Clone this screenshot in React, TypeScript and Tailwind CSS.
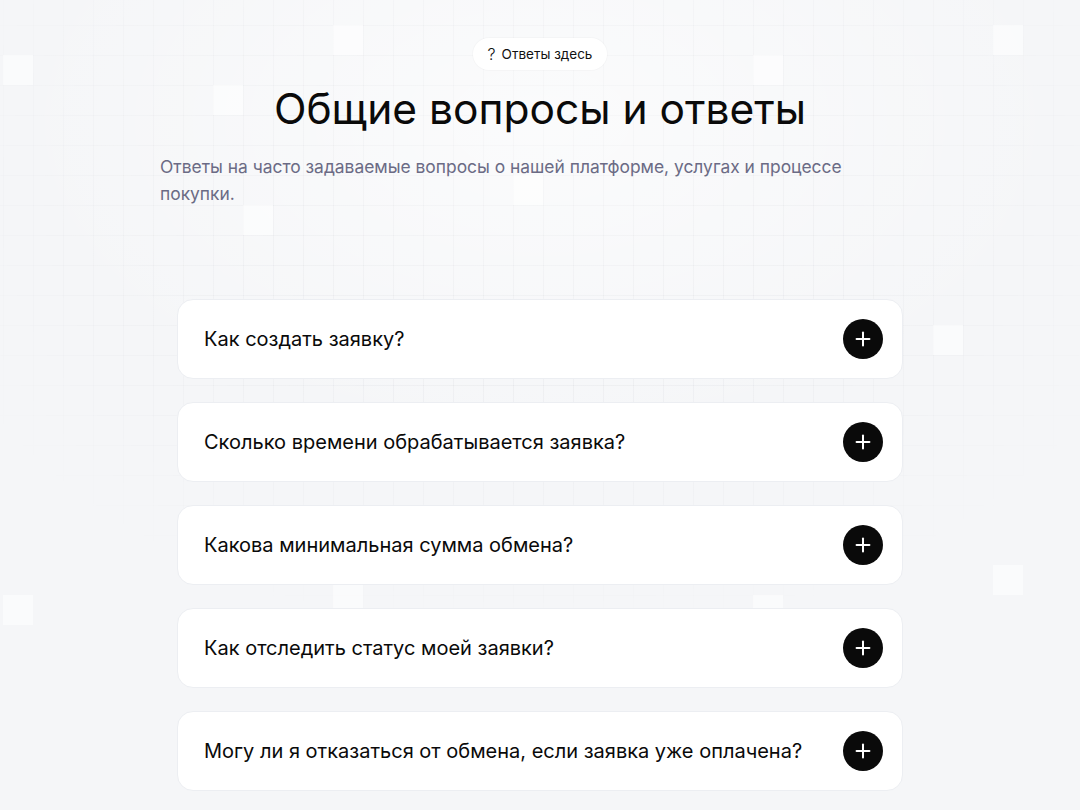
import { Plus } from "lucide-react";

const questions = [
  "Как создать заявку?",
  "Сколько времени обрабатывается заявка?",
  "Какова минимальная сумма обмена?",
  "Как отследить статус моей заявки?",
  "Могу ли я отказаться от обмена, если заявка уже оплачена?",
];

// светлые клетки поверх сетки
const tiles = [
  { x: 333, y: 25 },
  { x: 213, y: 85 },
  { x: 243, y: 205 },
  { x: 513, y: 175 },
  { x: 753, y: 55 },
  { x: 993, y: 25 },
  { x: 3, y: 55 },
  { x: 933, y: 325 },
  { x: 993, y: 565 },
  { x: 3, y: 595 },
  { x: 333, y: 585 },
  { x: 753, y: 595 },
];

export default function App() {
  return (
    <div
      className="relative min-h-[810px] w-full overflow-hidden bg-[#f5f6f8]"
      style={{ fontFamily: "Inter, 'Noto Sans', sans-serif" }}
    >
      {/* сетка на фоне */}
      <div className="pointer-events-none absolute inset-0 bg-[linear-gradient(to_right,rgba(15,23,42,0.035)_1px,transparent_1px),linear-gradient(to_bottom,rgba(15,23,42,0.035)_1px,transparent_1px)] bg-[size:30px_30px] bg-[position:3px_25px] [mask-image:radial-gradient(ellipse_60%_55%_at_50%_25%,black_40%,transparent_100%)]" />
      <div className="pointer-events-none absolute inset-0 bg-[radial-gradient(ellipse_50%_40%_at_50%_15%,rgba(255,255,255,0.6),transparent)]" />
      {tiles.map((t, i) => (
        <div
          key={i}
          className="pointer-events-none absolute h-[30px] w-[30px] bg-white/50"
          style={{ left: t.x, top: t.y }}
        />
      ))}

      <div className="relative flex flex-col items-center pt-[38px]">
        <div className="flex h-[32px] items-center gap-[6px] rounded-full bg-white px-[15px] text-[13.5px] text-[#111] shadow-[0_0_0_1px_rgba(0,0,0,0.02)]">
          <span className="text-[16px] font-light leading-none">?</span>
          <span>Ответы здесь</span>
        </div>

        <h1 className="mt-[14px] text-[42.5px] font-normal leading-[50px] text-[#0a0a0a]">
          Общие вопросы и ответы
        </h1>

        <p className="mt-[19px] w-[760px] text-[17.4px] leading-[27px] text-[#6b6b85]">
          Ответы на часто задаваемые вопросы о нашей платформе, услугах и процессе покупки.
        </p>

        <div className="mt-[92px] flex w-[726px] flex-col gap-[23px]">
          {questions.map((q) => (
            <div
              key={q}
              className="flex h-[80px] items-center justify-between rounded-[16px] border border-[#eceef2] bg-white pl-[26px] pr-[19px]"
            >
              <span className="text-[20px] leading-[28px] text-[#0a0a0a]">{q}</span>
              <span className="flex h-[40px] w-[40px] items-center justify-center rounded-full bg-[#0a0a0a] text-white">
                <Plus size={22} strokeWidth={2.2} />
              </span>
            </div>
          ))}
        </div>
      </div>
    </div>
  );
}
